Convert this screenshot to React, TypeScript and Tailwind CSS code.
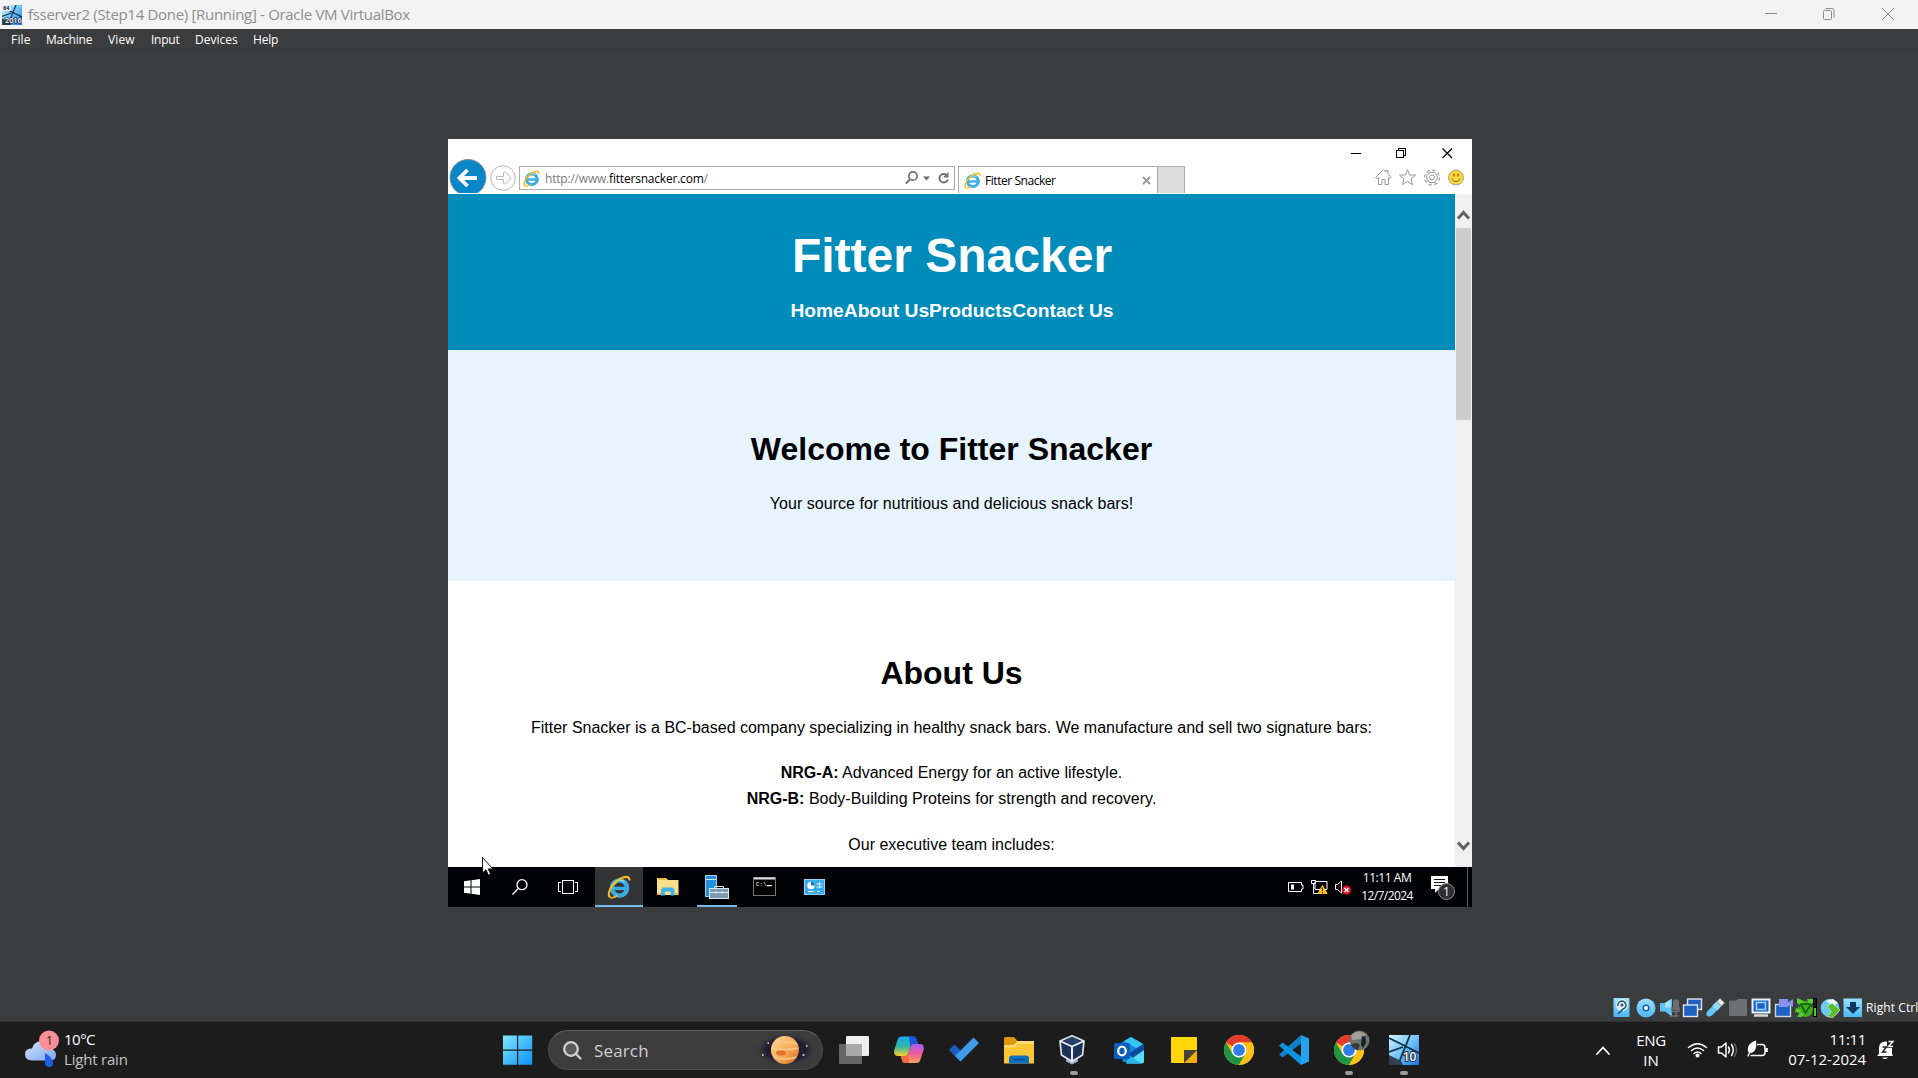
import React from "react";

const ui = "font-['Open_Sans','Noto_Sans',sans-serif]";

/* ---------- shared drawings ---------- */

function IeLogo({ size, className = "" }: { size: number; className?: string }) {
  return (
    <svg width={size} height={size} viewBox="0 0 24 24" className={className}>
      <circle cx="12.5" cy="13" r="7.6" fill="none" stroke="#3aaee4" strokeWidth="4.4" />
      <path d="M14 15.500h9.500v3h-9.500z" fill="#fff" fillOpacity="0" />
      <path d="M6 13.4h16" stroke="#3aaee4" strokeWidth="3.4" />
      <path d="M7 8.500c2-3 7-4.500 10.500-1.500" stroke="#8fdcfa" strokeWidth="1.500" fill="none" />
      <path d="M3.500 22.500C-1 20.500 4 10 11 5.200 17 1 23 .6 22.400 5.500" fill="none" stroke="#f5bd1f" strokeWidth="2.200" />
      <path d="M3.500 22.500c2 .8 5-.6 7-2" fill="none" stroke="#f5bd1f" strokeWidth="1.600" />
    </svg>
  );
}

function GuestOsIcon({ size, label, badge }: { size: number; label: string; badge?: boolean }) {
  return (
    <svg width={size} height={size} viewBox="0 0 30 30">
      <defs>
        <linearGradient id={"os" + label} x1="0" y1="0" x2="1" y2="1">
          <stop offset="0" stopColor="#d8f3ff" />
          <stop offset=".5" stopColor="#6fc3f5" />
          <stop offset="1" stopColor="#1673e8" />
        </linearGradient>
      </defs>
      <rect width="30" height="30" fill={"url(#os" + label + ")"} />
      <path d="M0 3l30 15M21 0L9 30M0 17l14-5" stroke="#12304a" strokeWidth="1.800" fill="none" />
      <path d="M0 20l12 6 2 4H0z" fill="#33404f" />
      {badge && (
        <>
          <rect width="13" height="9" fill="#e8eef2" />
          <text x="6.500" y="7.500" fontSize="8" fontWeight="700" textAnchor="middle" fill="#222" fontFamily="Open Sans">64</text>
        </>
      )}
      <text x={badge ? 17 : 20.500} y={badge ? 27 : 25.500} fontSize={badge ? 11 : 12} fontWeight="600" textAnchor="middle" fill="#fff" stroke="#1c2d40" strokeWidth="2" paintOrder="stroke" fontFamily="Open Sans">{label}</text>
    </svg>
  );
}

/* ---------- host window chrome ---------- */

function HostTitleBar() {
  return (
    <div className="flex h-[29px] shrink-0 items-center bg-[#f3f3f3] pl-[2px]">
      <GuestOsIcon size={20} label="2016" badge />
      <span className="ml-[6px] text-[15px] tracking-[-0.31px] whitespace-pre text-[#8e8e8e]">
        fsserver2 (Step14 Done) [Running] - Oracle VM VirtualBox
      </span>
      <svg width="138" height="29" viewBox="0 0 138 29" fill="none" stroke="#8c8c8c" className="ml-auto mr-[15px]">
        <path d="M0 13.500h12" />
        <rect x="58.500" y="10.500" width="8" height="9" rx="1" />
        <path d="M60.500 8.500h6.500q2 0 2 2v7" />
        <path d="M117 8l12 12M129 8l-12 12" />
      </svg>
    </div>
  );
}

function HostMenu() {
  return (
    <div className="flex h-[21px] shrink-0 items-center border-b border-[#343537] pt-[2px] pl-[11px] text-[12px] text-white">
      <span className="w-[35px] tracking-[0.2px]">File</span>
      <span className="w-[62px] tracking-[-0.2px]">Machine</span>
      <span className="w-[43px] tracking-[0.1px]">View</span>
      <span className="w-[44px] tracking-[-0.25px]">Input</span>
      <span className="w-[58px] tracking-[0px]">Devices</span>
      <span className="tracking-[-0.2px]">Help</span>
    </div>
  );
}

/* ---------- guest browser ---------- */

function CaptionButtons() {
  return (
    <svg width="102" height="12" viewBox="0 0 102 12" fill="none" stroke="#000" shapeRendering="crispEdges">
      <path d="M0 6.500h10" />
      <rect x="45.500" y="3.500" width="7" height="7" />
      <path d="M47.500 3V1.500h7v7H53" />
      <path d="M91.500 1.500l9.500 9.500M101 1.500L91.500 11" shapeRendering="auto" strokeWidth="1.200" />
    </svg>
  );
}

function BrowserToolbar() {
  return (
    <div className="flex h-[55px] flex-col bg-white">
      <div className="-mb-[2px] flex h-[20px] shrink-0 items-end justify-end pr-[19px]">
        <CaptionButtons />
      </div>
      <div className="flex h-[36px] items-start overflow-hidden">
        <svg width="71" height="36" viewBox="0 0 71 36" className="shrink-0">
          <circle cx="20" cy="20.500" r="18" fill="#0886c8" stroke="#8d8f90" strokeWidth="1" />
          <path d="M29 21H13M19.500 13l-8 8 8 8" fill="none" stroke="#fff" strokeWidth="3.800" />
          <circle cx="55" cy="21" r="12.300" fill="#fff" stroke="#b5b5b5" />
          <path d="M48.500 19.500h7v-4l2-.5 5.500 6-5.500 6-2-.5v-4h-7z" fill="none" stroke="#bcbcbc" strokeLinejoin="round" />
        </svg>
        <div className="mt-[9px] flex h-[24px] w-[436px] shrink-0 items-center border border-[#adadad]">
          <IeLogo size={17} className="ml-[3px]" />
          <span className="ml-[5px] pt-px text-[12px] tracking-[-0.2px] text-[#7a7a7a]">
            http://www.<span className="text-black">fittersnacker.com</span>/
          </span>
          <svg width="44" height="16" viewBox="0 0 44 16" fill="none" stroke="#6f6f6f" className="ml-auto mr-[5px]">
            <circle cx="8" cy="6" r="4.200" strokeWidth="1.700" />
            <path d="M5 9.500L.8 13.500" strokeWidth="2" />
            <path d="M18 6.500h7l-3.500 4z" fill="#6f6f6f" stroke="none" />
            <path d="M42 5.500a4.300 4.300 0 1 0 .8 4" strokeWidth="1.900" />
            <path d="M43.500 2v5.500h-5.500z" fill="#6f6f6f" stroke="none" />
          </svg>
        </div>
        <div className="mt-[9px] ml-[3px] flex h-[27px] w-[199px] shrink-0 items-center border-t border-l border-[#adadad]">
          <IeLogo size={17} className="ml-[5px]" />
          <span className="ml-[4px] pt-px text-[12px] tracking-[-0.45px] text-black">Fitter Snacker</span>
          <svg width="9" height="9" viewBox="0 0 9 9" stroke="#9c9c9c" strokeWidth="2" className="ml-auto mr-[6px]">
            <path d="M1 1l7 7M8 1L1 8" />
          </svg>
        </div>
        <div className="mt-[9px] h-[27px] w-[28px] shrink-0 border border-b-0 border-[#adadad] bg-[#dcdcdc]" />
        <svg width="90" height="18" viewBox="0 0 90 18" fill="none" stroke="#9b9b9b" className="mt-[11px] mr-[7px] ml-auto">
          <path d="M.5 9.500L8.500 1.500l2.500 2.500V2.500h2v3.500l3 3.500-1 1-1.500-1v7H10v-5H7v5H3.500V9.500L2 10.500z" />
          <path d="M32.500 1.500l2.200 5.500h6l-4.700 3.800 1.700 6-5.200-3.500-5.200 3.500 1.700-6L24.500 7h6z" />
          <circle cx="57" cy="9.500" r="2.500" />
          <circle cx="57" cy="9.500" r="6.800" strokeWidth="2.400" strokeDasharray="3.100 2.240" />
          <circle cx="57" cy="9.500" r="5.300" />
          <circle cx="57" cy="9.500" r="6.500" stroke="#fff" strokeWidth="1" />
          <circle cx="81" cy="9.500" r="7.500" fill="#ffd93b" stroke="#a8a294" />
          <path d="M79 5.500v3M83 5.500v3" stroke="#7a6420" strokeWidth="1.300" />
          <path d="M77 10.500c1 4 7 4 8 0" stroke="#7a6420" />
        </svg>
      </div>
    </div>
  );
}

function SnackerSite() {
  return (
    <div className="flex w-[1007px] flex-col overflow-hidden bg-white text-center font-['Liberation_Sans',Arial,sans-serif] text-[16px] leading-[26px] text-black">
      <header className="h-[156px] shrink-0 bg-[#008cba] pt-[24px] pl-px text-white">
        <h1 className="text-[48px] leading-[76px] font-bold">Fitter Snacker</h1>
        <nav className="flex justify-center pt-px text-[19.2px] leading-[31px] font-bold">
          <span>Home</span>
          <span>About Us</span>
          <span>Products</span>
          <span>Contact Us</span>
        </nav>
      </header>
      <section className="h-[231px] shrink-0 bg-[#e7f4fd] pt-[74px]">
        <h2 className="text-[32px] leading-[51px] font-bold">Welcome to Fitter Snacker</h2>
        <p className="mt-[16px] tracking-[0.04px]">Your source for nutritious and delicious snack bars!</p>
      </section>
      <section className="pt-[67px]">
        <h2 className="text-[32px] leading-[51px] font-bold">About Us</h2>
        <p className="mt-[16px]">
          Fitter Snacker is a BC-based company specializing in healthy snack bars. We manufacture and sell two signature bars:
        </p>
        <ul className="mt-[19px]">
          <li><b>NRG-A:</b> Advanced Energy for an active lifestyle.</li>
          <li><b>NRG-B:</b> Body-Building Proteins for strength and recovery.</li>
        </ul>
        <p className="mt-[20px]">Our executive team includes:</p>
      </section>
    </div>
  );
}

function ScrollBar() {
  return (
    <div className="flex w-[17px] flex-col items-center bg-[#f0f0f0]">
      <svg width="17" height="34" viewBox="0 0 17 34" className="shrink-0">
        <path d="M3 24.500l5.500-6 5.500 6" fill="none" stroke="#606060" strokeWidth="3" />
      </svg>
      <div className="h-[192px] w-[15px] bg-[#cdcdcd]" />
      <svg width="17" height="34" viewBox="0 0 17 34" className="mt-auto shrink-0">
        <path d="M3 9.500l5.500 6 5.500-6" fill="none" stroke="#606060" strokeWidth="3" />
      </svg>
    </div>
  );
}

function GuestSlot({ children, running, active }: { children: React.ReactNode; running?: boolean; active?: boolean }) {
  return (
    <div className={"relative flex h-[40px] w-[48px] items-center justify-center " + (active ? "bg-[#333436]" : "")}>
      {children}
      {running && <div className={"absolute bottom-0 h-[2px] bg-[#76b9ed] " + (active ? "w-[48px]" : "w-[40px]")} />}
    </div>
  );
}

function GuestTaskbar() {
  return (
    <div className="flex h-[40px] shrink-0 bg-[#010206]">
      <GuestSlot>
        <svg width="16" height="16" viewBox="0 0 16 16" fill="#fff">
          <path d="M0 2.200l6.500-.9v6.200H0zM7.500 1.200L16 0v7.500H7.500zM0 8.500h6.500v6.200L0 13.800zM7.500 8.500H16V16l-8.500-1.200z" />
        </svg>
      </GuestSlot>
      <GuestSlot>
        <svg width="16" height="16" viewBox="0 0 16 16" fill="none" stroke="#fff" strokeWidth="1.300">
          <circle cx="10" cy="5.700" r="5" />
          <path d="M6.500 9.200L.5 15.500" />
        </svg>
      </GuestSlot>
      <GuestSlot>
        <svg width="20" height="14" viewBox="0 0 20 14" fill="none" stroke="#fff" shapeRendering="crispEdges">
          <rect x="4.500" y=".5" width="11" height="13" />
          <path d="M3 2.500H.5v9H3M17 2.500h2.500v9H17" />
        </svg>
      </GuestSlot>
      <div className="ml-[3px] flex gap-px">
        <GuestSlot active running>
          <IeLogo size={24} />
        </GuestSlot>
        <GuestSlot>
          <svg width="22" height="20" viewBox="0 0 22 20">
            <path d="M0 1h9l2 2h10.500v15H0z" fill="#fbe08c" />
            <path d="M1 1h8v2H1z" fill="#e9b93c" />
            <path d="M0 16h4v2H0zM18 16h3.500v2H18z" fill="#e9b93c" />
            <path d="M4 18.500v-6l2-2h9.500l2 2v6h-4v-4H8v4z" fill="#3fb2e8" />
          </svg>
        </GuestSlot>
        <GuestSlot running>
          <svg width="24" height="24" viewBox="0 0 24 24">
            <path d="M.5.5h11v21H.5z" fill="#1e8fdc" stroke="#d8ecf8" strokeWidth=".8" />
            <path d="M1 4.500h10" stroke="#d8ecf8" />
            <rect x="4.500" y="13.500" width="19" height="10" fill="#7a9bb0" stroke="#dfe8ee" />
            <path d="M9.500 13.500V11.500h9v2M5 17.500h18M11 16v2.500M17 16v2.500" stroke="#dfe8ee" fill="none" />
          </svg>
        </GuestSlot>
        <GuestSlot>
          <svg width="23" height="19" viewBox="0 0 23 19" className="-mt-px mr-[3px]">
            <rect x=".5" y=".5" width="22" height="18" fill="#000" stroke="#777" />
            <path d="M1 1.500h21" stroke="#e0e0e0" strokeWidth="2" />
            <text x="3" y="9" fontSize="6" fill="#fff" fontFamily="Liberation Mono">C:\_</text>
            <path d="M14 8.500h5" stroke="#fff" />
          </svg>
        </GuestSlot>
        <GuestSlot>
          <svg width="21" height="16" viewBox="0 0 21 16" className="mr-[1px]">
            <rect width="21" height="16" fill="#3aabea" />
            <rect x=".5" y=".5" width="20" height="15" fill="none" stroke="#8cd7fa" />
            <circle cx="7" cy="6.500" r="3.700" fill="#fff" />
            <path d="M7 6.500V2.800a3.700 3.700 0 0 1 3.700 3.700z" fill="#1273c0" />
            <path d="M12.500 5h6M12.500 8h6M15.500 3v6" stroke="#d8f2ff" />
            <path d="M4 12.500h7M13 12.500h3" stroke="#fff" />
            <path d="M9 12.500h2" stroke="#e8b53a" />
          </svg>
        </GuestSlot>
      </div>
      <div className="ml-auto flex items-center">
        <svg width="64" height="18" viewBox="0 0 64 18" fill="none" stroke="#fff">
          <path d="M.5 4.500h13V7h1.500v4h-1.500v2.500H.5z" />
          <path d="M3 6.500h3v5H3z" fill="#fff" stroke="none" />
          <path d="M27 3.500h12v8H27zM23.500 2.500h4v3h-4zM25.500 6v9.500H31" />
          <path d="M34.500 7.500l4.500 8h-9z" fill="#ffc20e" stroke="#ffc20e" />
          <path d="M34.500 9.500v3.500M34.500 14v1.500" stroke="#222" />
          <path d="M47.500 6.500h2l4-3.500v12l-4-3.500h-2z" />
          <circle cx="58.500" cy="12" r="4.500" fill="#e81123" stroke="none" />
          <path d="M56.500 10l4 4M60.500 10l-4 4" strokeWidth="1.400" />
        </svg>
        <div className="ml-[8px] flex w-[54px] flex-col text-center text-[12px] leading-[18px] whitespace-nowrap text-white">
          <span className="tracking-[-0.45px]">11:11 AM</span>
          <span className="tracking-[-0.6px]">12/7/2024</span>
        </div>
        <svg width="26" height="26" viewBox="0 0 26 26" className="ml-[16px]">
          <path d="M1 2h17v13H9l-4 4v-4H1z" fill="#fff" />
          <path d="M4 5.500h11M4 8.500h11M4 11.500h7" stroke="#111" />
          <circle cx="16.500" cy="17.500" r="8" fill="#2d2f33" stroke="#8b8d90" />
          <text x="16.500" y="21.800" fontSize="12" textAnchor="middle" fill="#fff" fontFamily="Open Sans">1</text>
        </svg>
        <div className="mr-[4px] ml-[11px] h-[40px] w-px bg-[#5b5c5f]" />
      </div>
    </div>
  );
}

function GuestScreen() {
  return (
    <div className="relative mt-[89px] ml-[448px] flex h-[768px] w-[1024px] shrink-0 flex-col overflow-hidden bg-white">
      <BrowserToolbar />
      <div className="flex h-[673px] shrink-0 overflow-hidden">
        <SnackerSite />
        <ScrollBar />
      </div>
      <GuestTaskbar />
      <svg width="12" height="19" viewBox="0 0 12 19" className="absolute top-[718px] left-[34px]">
        <path d="M.5.500v15.500l3.500-3.200 2.400 5.400 2.300-1-2.400-5.200h4.700z" fill="#fff" stroke="#000" strokeWidth=".9" />
      </svg>
    </div>
  );
}

/* ---------- VirtualBox status bar ---------- */

function StatusBar() {
  return (
    <div className="mt-auto mb-[3px] flex h-[20px] shrink-0 items-center justify-end gap-[3px] overflow-hidden">
      <svg width="250" height="20" viewBox="0 0 250 20" className="shrink-0">
        <defs>
          <linearGradient id="sky" x1="0" y1="0" x2="0" y2="1">
            <stop offset="0" stopColor="#9be0ff" />
            <stop offset="1" stopColor="#4ab8f0" />
          </linearGradient>
        </defs>
        <rect x=".5" width="16" height="19" rx="1" fill="url(#sky)" />
        <circle cx="9" cy="7" r="6" fill="#e8f6fd" />
        <path d="M5 8a4 4 0 1 1 5 3l-5 5" fill="none" stroke="#27587c" strokeWidth="1.600" />
        <circle cx="9" cy="7" r="1.500" fill="#27587c" />
        <circle cx="33" cy="10" r="9.500" fill="url(#sky)" />
        <circle cx="33" cy="10" r="2.800" fill="#fff" stroke="#1765a0" strokeWidth="1.500" />
        <path d="M47 5h5l7-4.500v18l-7-5h-5z" fill="#5cc2f2" />
        <path d="M52 5l5.500-3.500v8H52z" fill="#a5e4ff" />
        <rect x="60" y="1.500" width="6" height="11" rx="2" fill="#6d6f72" />
        <path d="M56 18h10M63 13v5M59 9v4.500h7V9" stroke="#6d6f72" strokeWidth="1.500" fill="none" />
        <rect x="74.500" y="1" width="14" height="10.500" fill="#1d62c4" stroke="#dfe4ea" strokeWidth="1.400" />
        <rect x="70.500" y="7" width="14" height="11.500" fill="#1d62c4" stroke="#dfe4ea" strokeWidth="1.400" />
        <path d="M94 18c-2-3 1-6 7-11l4 4c-5 6-8 9-11 7z" fill="#66c6f5" />
        <path d="M99 8l4.500-4.500 5 4.500-4 4.500z" fill="#93dbfa" />
        <path d="M104 3.500l3-3 4.500 4.500-3 3z" fill="#e9ecee" stroke="#9aa" strokeWidth=".6" />
        <path d="M116 2.500h7l2-1.500h9v17h-18z" fill="#6f7072" />
        <rect x="139.500" y="1.500" width="17" height="13" fill="#1d62c4" stroke="#eef1f4" strokeWidth="2" />
        <rect x="143.500" y="4.500" width="9" height="7" fill="#1d62c4" stroke="#8fd5fa" strokeWidth="1.600" />
        <path d="M141 17.500h14" stroke="#d5d8dc" strokeWidth="2.500" />
        <rect x="162.500" y="6.500" width="15" height="12" fill="#1d62c4" stroke="#cfd6de" strokeWidth="1.400" />
        <rect x="166" y="1" width="9" height="8" fill="#8293f0" />
        <path d="M174 5l6-4v8z" fill="#8293f0" />
        <ellipse cx="192.500" cy="11" rx="7.500" ry="8" fill="#3fae1a" />
        <path d="M184 0l7 3-2 5-5-3zM194 1h6v4l-4 2zM183 10l5 2-1 3-5-1zM184 19l3-5 4 3-3 2z" fill="#57cf2b" />
        <path d="M188.500 7.500l4 7.500 4.500-7.500M186 9l2-3h9l2 3" stroke="#12610c" strokeWidth="1.600" fill="none" />
        <rect x="200.500" y=".5" width="3" height="18" fill="#3ed425" stroke="#000" />
        <rect x="200.500" y=".5" width="3" height="9" fill="#1b1b1b" stroke="#000" />
        <circle cx="217" cy="10" r="9.300" fill="#6cc8f4" />
        <path d="M213 3l7-2 5 4-5 3z" fill="#eaf7fd" />
        <path d="M219 5l8 7-7 7.500-6-1 4.500-5-4.500-5z" fill="#57bd2b" stroke="#d6f0c8" strokeWidth=".7" />
        <rect x="230.500" y=".5" width="18.500" height="18.500" fill="url(#sky)" />
        <path d="M237 4h6v5h4l-7 7-7-7h4z" fill="#12365f" />
      </svg>
      <span className="w-[52px] shrink-0 overflow-hidden text-[12px] tracking-[0.1px] whitespace-nowrap text-white">Right Ctrl</span>
    </div>
  );
}

/* ---------- host taskbar ---------- */

function ChromeLogo() {
  return (
    <svg width="30" height="30" viewBox="0 0 30 30">
      <circle cx="15" cy="15" r="15" fill="#fbc116" />
      <path d="M15 15L2 7.500A15 15 0 0 1 28 7.500H15z" fill="#e33b2e" />
      <path d="M2 7.500a15 15 0 0 0 13 22.500l6.500-11.300L15 15 8.500 18.700z" fill="#1e9447" />
      <path d="M28 7.500H15v7.500l6.500 3.700L15 30A15 15 0 0 0 28 7.500z" fill="#fbc116" />
      <circle cx="15" cy="15" r="7.500" fill="#fff" />
      <circle cx="15" cy="15" r="5.900" fill="#2f7de9" />
    </svg>
  );
}

function HostApp({ children, running }: { children: React.ReactNode; running?: boolean }) {
  return (
    <div className="relative flex h-[57px] w-[30px] items-center justify-center">
      {children}
      {running && <div className="absolute bottom-[4px] h-[4px] w-[8px] rounded-full bg-[#9b9b9b]" />}
    </div>
  );
}

function SearchPill() {
  return (
    <div className="ml-[15px] flex h-[40px] w-[275px] items-center rounded-full border border-[#4b4b4b] border-t-[#636363] bg-[#3c3c3c] pl-[14px]">
      <svg width="19" height="19" viewBox="0 0 19 19" fill="none" stroke="#d2d2d2" strokeWidth="2.300" strokeLinecap="round">
        <circle cx="8" cy="8" r="6.800" fill="#5a5a5a" />
        <path d="M13 13l4.500 4.500" />
      </svg>
      <span className="ml-[12px] pt-px text-[17px] tracking-[0.15px] text-[#cfcfcf]">Search</span>
      <svg width="62" height="34" viewBox="0 0 62 34" className="ml-auto mr-[5px]">
        <defs>
          <radialGradient id="space">
            <stop offset="0" stopColor="#1b1733" />
            <stop offset=".65" stopColor="#241c34" />
            <stop offset="1" stopColor="#3c3c3c" stopOpacity="0" />
          </radialGradient>
          <linearGradient id="planet" x1="0" y1="0" x2="1" y2="1">
            <stop offset="0" stopColor="#ffdd94" />
            <stop offset=".6" stopColor="#f5a552" />
            <stop offset="1" stopColor="#c86422" />
          </linearGradient>
        </defs>
        <ellipse cx="31" cy="17" rx="31" ry="17" fill="url(#space)" />
        <circle cx="30" cy="17" r="14" fill="url(#planet)" />
        <path d="M18 11q12-4 24 0M16.500 15q13 3 27 0M19 24q11 4 22 0" stroke="#f8c98a" fill="none" strokeWidth="1.500" />
        <ellipse cx="26" cy="20" rx="5" ry="2.500" fill="#e6712f" />
        <path d="M7 22h1.500M12.500 10h1.500M47.500 22h2M51 13h1.500" stroke="#f5e3bb" strokeWidth="1.500" />
      </svg>
    </div>
  );
}

function HostApps() {
  return (
    <div className="ml-[16px] flex gap-[25px]">
      <HostApp>
        <svg width="30" height="30" viewBox="0 0 30 30">
          <rect x="0" y="9" width="23" height="20" rx="1" fill="#666" />
          <rect x="7" y="1" width="23" height="20" rx="1" fill="#efefef" />
          <rect x="7" y="9" width="16" height="12" fill="#a9a9a9" />
        </svg>
      </HostApp>
      <HostApp>
        <svg width="30" height="30" viewBox="0 0 30 30">
          <defs>
            <linearGradient id="cpA" x1="0" y1="0" x2="0" y2="1">
              <stop offset="0" stopColor="#1aa6f0" />
              <stop offset=".5" stopColor="#2fb6a4" />
              <stop offset="1" stopColor="#f3d32a" />
            </linearGradient>
            <linearGradient id="cpB" x1="0" y1="0" x2="0" y2="1">
              <stop offset="0" stopColor="#a55cf0" />
              <stop offset=".5" stopColor="#ee5a9a" />
              <stop offset="1" stopColor="#fba55a" />
            </linearGradient>
          </defs>
          <path d="M8 1.500h11c2 0 3 1 3.500 3L24 9h-4c-2 0-3 1-3.500 3l-2 6c-.6 2-1.500 3-3.500 3H4C1 21-.5 19 .3 15L3.500 5c.8-2.500 2-3.500 4.500-3.500z" fill="url(#cpA)" />
          <path d="M15 1.500h4c2 0 3 1 3.500 3L24 9h-4c-1.800 0-3 1-3.500 3z" fill="#1c55dc" />
          <path d="M22 28H11.500c-2 0-3-1-3.500-3l-1.300-4H11c2 0 3-1 3.500-3l2-6c.6-2 1.500-3 3.500-3h6c3 0 4.500 2 3.600 6l-3.100 9.500c-.8 2.500-2 3.500-4.500 3.500z" fill="url(#cpB)" />
          <path d="M15 28h-3.500c-2 0-3-1-3.500-3l-1.300-4H11c1.800 0 2.700-.7 3.300-2z" fill="#f26a3f" />
        </svg>
      </HostApp>
      <HostApp>
        <svg width="30" height="30" viewBox="0 0 30 30">
          <path d="M0 15l5.500-5.500 11.500 11.500-5.500 5.500z" fill="#1d5cc0" />
          <path d="M6 21L24.500 2.500 30 8 11.500 26.500z" fill="#3d9bea" />
        </svg>
      </HostApp>
      <HostApp>
        <svg width="30" height="30" viewBox="0 0 30 30">
          <path d="M0 3.500Q0 2 1.500 2H10l3.500 4H20v8H0z" fill="#dc9808" />
          <path d="M0 10h10l3.500-4H30v22.500H0z" fill="#fdc634" />
          <path d="M0 10h10l3.500-4H30v3H14l-3.500 3.500H0z" fill="#ffdc73" />
          <path d="M5 28.500v-5q0-3 3-3h14q3 0 3 3v5z" fill="#0c6fc0" />
          <path d="M9 24.500h12" stroke="#0a4a86" strokeWidth="1.200" />
        </svg>
      </HostApp>
      <HostApp running>
        <svg width="30" height="30" viewBox="0 0 30 30" className="-translate-x-[2px]">
          <path d="M9 24.500l6-2 6 2v2l-6 3-6-3z" fill="#9caac0" />
          <path d="M15 .8L27 6l-1.500 14L15 26.500 4.500 20 3 6z" fill="#1b3157" stroke="#dfe6f1" strokeWidth="1.700" strokeLinejoin="round" />
          <path d="M3 6l12 5.500L27 6M15 11.500v15" fill="none" stroke="#f2f5fa" strokeWidth="1.900" />
          <path d="M6.500 6L15 2.500 23.500 6 15 9.500z" fill="#27446f" />
        </svg>
      </HostApp>
      <HostApp>
        <svg width="30" height="30" viewBox="0 0 30 30">
          <path d="M5 9l12-7 12 7v18H9z" fill="#1784d4" />
          <path d="M10 6l7-4 12 7-7 4z" fill="#36c5f0" />
          <path d="M14 19l16-10v6l-14 9z" fill="#0b4a9e" />
          <path d="M30 15v11q0 2.500-2.500 2.500H12z" fill="#52ddf8" />
          <path d="M12 28.500h15L15 20z" fill="#28b4ea" />
          <rect y="8" width="16" height="16" rx="1.500" fill="#0a5fbe" />
          <ellipse cx="8" cy="16" rx="3.800" ry="4.300" fill="none" stroke="#fff" strokeWidth="2.200" />
        </svg>
      </HostApp>
      <HostApp>
        <svg width="30" height="30" viewBox="0 0 30 30">
          <path d="M3 2h24q1 0 1 1v12L15 28H3q-1 0-1-1V3q0-1 1-1z" fill="#ffd60a" />
          <path d="M28 15v12q0 1-1 1H15z" fill="#f3ae0a" />
          <path d="M15 15h13L15 28z" fill="#4a4538" />
        </svg>
      </HostApp>
      <HostApp>
        <ChromeLogo />
      </HostApp>
      <HostApp>
        <svg width="30" height="30" viewBox="0 0 30 30">
          <path d="M22 0l8 3.500v23L22 30z" fill="#24a3ec" />
          <path d="M22 0v8.500L3.500 22.500 0 19.500z" fill="#1180c8" />
          <path d="M22 30v-8.500L3.500 7.500 0 10.500z" fill="#0a95dc" />
        </svg>
      </HostApp>
      <HostApp running>
        <ChromeLogo />
        <svg width="21" height="21" viewBox="0 0 21 21" className="absolute top-[8px] left-[15px]">
          <circle cx="10.500" cy="10.500" r="10" fill="#6e7468" />
          <path d="M2 5q8-7 15 0l-5 4-9 1z" fill="#a3a097" />
          <path d="M2 15q5-4 9 0l-2 5q-5-1-7-5z" fill="#343b3a" />
          <path d="M13 4l3 1 1 8-3 5-2-3z" fill="#182033" />
          <circle cx="14.500" cy="5" r="1.500" fill="#c79a80" />
        </svg>
      </HostApp>
      <HostApp running>
        <GuestOsIcon size={30} label="10" />
      </HostApp>
    </div>
  );
}

function HostTray() {
  return (
    <div className="ml-auto flex items-center text-[15px] leading-[20px] text-white">
      <svg width="14" height="9" viewBox="0 0 14 9" fill="none" stroke="#fff" strokeWidth="1.800" strokeLinecap="round">
        <path d="M1 8l6-6.500L13 8" />
      </svg>
      <div className="ml-[24px] flex w-[34px] flex-col items-center pb-px">
        <span className="tracking-[-0.3px]">ENG</span>
        <span>IN</span>
      </div>
      <svg width="82" height="22" viewBox="0 0 82 22" fill="none" stroke="#fff" strokeWidth="1.500" className="ml-[19px]">
        <path d="M1.500 8.500q9-7.500 18 0M4.500 11.500q6-5 12 0M7 14.500q3.500-3 7 0" strokeLinecap="round" />
        <circle cx="10.500" cy="16.500" r="2" fill="#fff" stroke="none" />
        <path d="M31.500 8h3l4.500-4v14l-4.500-4h-3z" strokeLinejoin="round" />
        <path d="M41.500 8q2 3 0 6M44.500 5.500q3.500 5.500 0 11" strokeLinecap="round" />
        <path d="M47 4q5 7 0 14" stroke="#5a5a5a" />
        <path d="M70 5.500h5q3 0 3 3v5q0 3-3 3H63.500" />
        <path d="M79.500 9v4" strokeWidth="2.500" />
        <path d="M69 1.500q1.500 12-6 12.500-3.500-1.500-1.500-7 2-4 7.500-5.500z" fill="#fff" stroke="none" />
        <path d="M61 17.500q1-5 5-8" stroke="#fff" strokeWidth="1.300" />
      </svg>
      <div className="ml-[11px] flex w-[86px] flex-col items-end pb-[3px] whitespace-nowrap">
        <span className="tracking-[-0.35px]">11:11</span>
        <span className="tracking-[-0.05px]">07-12-2024</span>
      </div>
      <svg width="18" height="20" viewBox="0 0 18 20" className="mr-[23px] ml-[11px]">
        <path d="M2 14V8q0-6.500 6.500-6.500 6 0 6.500 6.500v6l1 2H0z" fill="#fff" />
        <path d="M5 17.500h6q-3 3.500-6 0z" fill="#fff" />
        <path d="M5.500 7h4L5.500 12h4" stroke="#1c1c1c" fill="none" strokeWidth="1.400" />
        <rect x="10" y="0" width="8" height="8" fill="#1c1c1c" />
        <path d="M11.500 1.500h4.500l-4.500 5H16" stroke="#fff" fill="none" strokeWidth="1.400" />
      </svg>
    </div>
  );
}

function HostTaskbar() {
  return (
    <div className="flex h-[57px] shrink-0 items-center border-t border-[#303030] bg-[#1c1c1c]">
      <div className="flex w-[503px] items-center pl-[24px]">
        <svg width="36" height="38" viewBox="0 0 36 38" className="-mt-[3px]">
          <defs>
            <linearGradient id="cloud" x1="0" y1="0" x2="1" y2="1">
              <stop offset="0" stopColor="#d4e6ff" />
              <stop offset="1" stopColor="#78a6ec" />
            </linearGradient>
          </defs>
          <path d="M8 30.500q-7-.5-7-6.500 0-5.500 7-5.500 2-7.500 10-7.500t9.500 8q4.500 1.500 4.500 6 0 5-5 5.500z" fill="url(#cloud)" />
          <path d="M21 23q8 5 8 10 0 4-4 4t-4-4z" fill="#1f5be6" />
          <circle cx="25" cy="10.500" r="10" fill="#fb8f98" />
          <text x="25.500" y="14.500" fontSize="12" textAnchor="middle" fill="#222" fontFamily="Open Sans">1</text>
        </svg>
        <div className="ml-[4px] flex flex-col pb-[3px] text-[15px] leading-[20px]">
          <span className="tracking-[-0.5px] text-white">10°C</span>
          <span className="tracking-[-0.2px] text-[#c4c4c4]">Light rain</span>
        </div>
      </div>
      <svg width="30" height="30" viewBox="0 0 30 30">
        <defs>
          <linearGradient id="win" x1="0" y1="0" x2="1" y2="1">
            <stop offset="0" stopColor="#7fe8ff" />
            <stop offset="1" stopColor="#0b92f5" />
          </linearGradient>
        </defs>
        <path d="M0 .5h14v14H0zM15.200.5h14v14h-14zM0 15.700h14v14H0zM15.200 15.700h14v14h-14z" fill="url(#win)" />
      </svg>
      <SearchPill />
      <HostApps />
      <HostTray />
    </div>
  );
}

export default function App() {
  return (
    <div className={"flex h-[1078px] w-[1918px] flex-col overflow-hidden bg-[#3b3c3e] " + ui}>
      <HostTitleBar />
      <HostMenu />
      <GuestScreen />
      <StatusBar />
      <HostTaskbar />
    </div>
  );
}
